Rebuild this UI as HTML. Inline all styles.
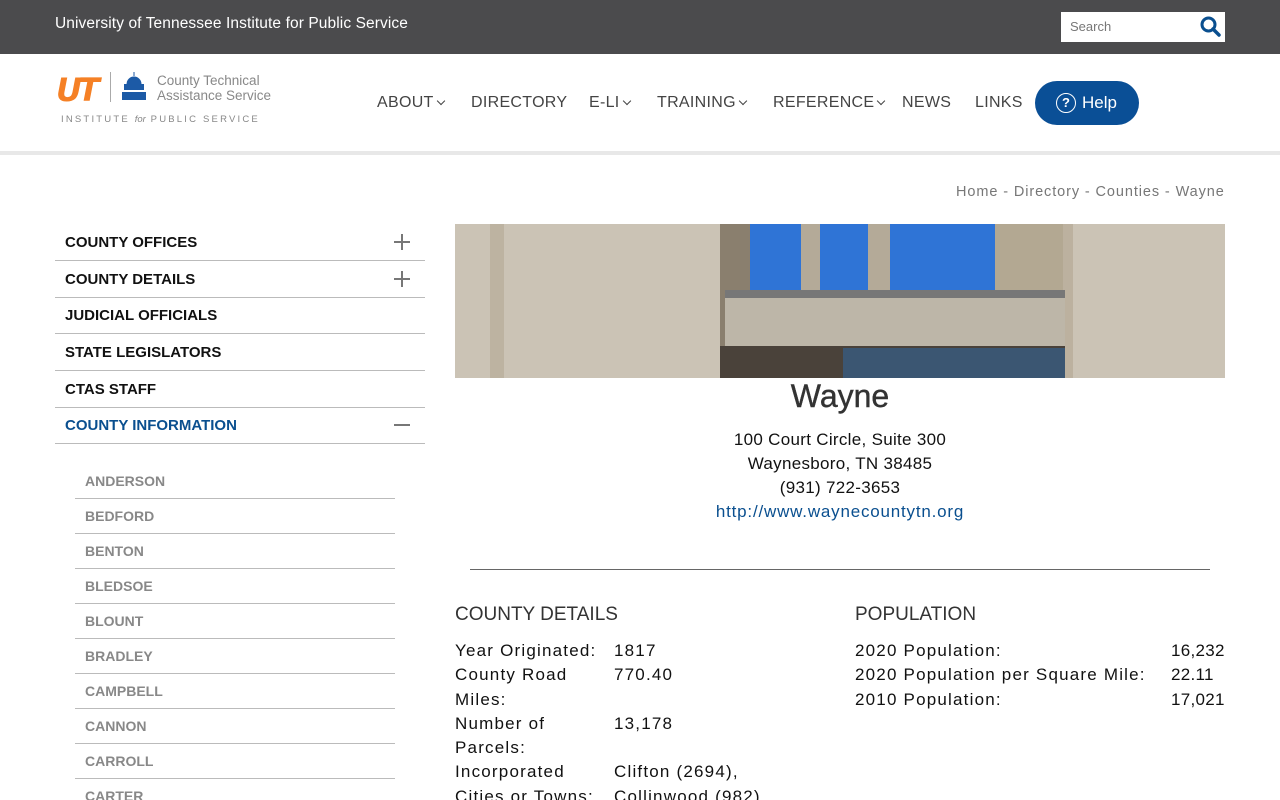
<!DOCTYPE html>
<html><head><meta charset="utf-8"><style>
*{margin:0;padding:0;box-sizing:border-box}
html,body{width:1280px;height:800px;overflow:hidden}
body{background:#fff;font-family:"Liberation Sans",sans-serif;position:relative;color:#222}
.a{position:absolute;white-space:nowrap}
.top{position:absolute;left:0;top:0;width:1280px;height:54px;background:#4b4b4d}
.nav{top:94px;font-size:16px;color:#444;letter-spacing:0.3px}
.chev{display:inline-block;width:6px;height:6px;border-right:1.5px solid #444;border-bottom:1.5px solid #444;transform:rotate(45deg);margin-left:4px;position:relative;top:-3px}
.side{position:absolute;left:55px;width:370px;height:37px;border-bottom:1px solid #bbb;font-weight:bold;font-size:15px;padding:10px 0 0 10px;color:#111}
.pl{position:absolute;right:15px;top:10px;width:16px;height:16px}
.pl:before{content:"";position:absolute;left:0;top:7px;width:16px;height:2px;background:#777}
.pl.p:after{content:"";position:absolute;left:7px;top:0;width:2px;height:16px;background:#777}
.sub{position:absolute;left:75px;width:320px;height:35px;border-bottom:1px solid #bbb;font-weight:bold;font-size:14px;color:#888;padding:9px 0 0 10px}
.dt{font-size:17px;color:#111;letter-spacing:1.2px}
</style></head><body>
<div class="top"></div>
<div class="a" style="left:55px;top:15px;color:#fff;font-size:15.5px;letter-spacing:0.1px">University of Tennessee Institute for Public Service</div>
<div class="a" style="left:1061px;top:12px;width:164px;height:30px;background:#fff"></div>
<div class="a" style="left:1070px;top:19px;font-size:13px;color:#777">Search</div>
<svg class="a" style="left:1199px;top:15px" width="24" height="24" viewBox="0 0 24 24"><circle cx="9.5" cy="9.5" r="6.5" stroke="#0a4f8f" stroke-width="3" fill="none"/><path d="M14 14l6 6" stroke="#0a4f8f" stroke-width="3.5" stroke-linecap="round"/></svg>
<div class="a" style="left:0;top:151px;width:1280px;height:4px;background:#e8e8e8"></div>
<div class="a" style="left:56px;top:71px;font-size:32px;font-weight:900;color:#f58025;letter-spacing:-4px;font-style:italic;font-family:'DejaVu Sans',sans-serif">UT</div>
<div class="a" style="left:110px;top:72px;width:1px;height:30px;background:#aaa"></div>
<svg class="a" style="left:119px;top:70px" width="30" height="32" viewBox="0 0 30 32"><path d="M15 2v4M8 14a7 7 0 0 1 14 0z" fill="#1c5aa6" stroke="#1c5aa6"/><rect x="5" y="14" width="20" height="6" fill="#1c5aa6"/><rect x="3" y="22" width="24" height="8" fill="#1c5aa6"/></svg>
<div class="a" style="left:157px;top:73px;font-size:13.5px;color:#888;line-height:15px">County Technical<br>Assistance Service</div>
<div class="a" style="left:61px;top:114px;font-size:9.5px;color:#888;letter-spacing:2.2px">INSTITUTE <i style="letter-spacing:0">for</i> PUBLIC SERVICE</div>
<div class="a nav" style="left:377px">ABOUT<span class="chev"></span></div>
<div class="a nav" style="left:471px">DIRECTORY</div>
<div class="a nav" style="left:589px">E-LI<span class="chev"></span></div>
<div class="a nav" style="left:657px">TRAINING<span class="chev"></span></div>
<div class="a nav" style="left:773px">REFERENCE<span class="chev"></span></div>
<div class="a nav" style="left:902px">NEWS</div>
<div class="a nav" style="left:975px">LINKS</div>
<div class="a" style="left:1035px;top:81px;width:104px;height:44px;border-radius:22px;background:#0a4f96"></div>
<div class="a" style="left:1056px;top:93px;width:20px;height:20px;border:1.5px solid #fff;border-radius:50%;color:#fff;font-size:13px;font-weight:bold;text-align:center;line-height:17px">?</div>
<div class="a" style="left:1082px;top:93px;color:#fff;font-size:17px">Help</div>
<div class="a" style="left:956px;top:184px;font-size:14.5px;color:#777;letter-spacing:0.9px">Home - Directory - Counties - Wayne</div>
<div class="side" style="top:224px">COUNTY OFFICES<span class="pl p"></span></div>
<div class="side" style="top:261px">COUNTY DETAILS<span class="pl p"></span></div>
<div class="side" style="top:297px">JUDICIAL OFFICIALS</div>
<div class="side" style="top:334px">STATE LEGISLATORS</div>
<div class="side" style="top:371px">CTAS STAFF</div>
<div class="side" style="top:407px;color:#0a4f8f">COUNTY INFORMATION<span class="pl"></span></div>
<div class="sub" style="top:464px">ANDERSON</div>
<div class="sub" style="top:499px">BEDFORD</div>
<div class="sub" style="top:534px">BENTON</div>
<div class="sub" style="top:569px">BLEDSOE</div>
<div class="sub" style="top:604px">BLOUNT</div>
<div class="sub" style="top:639px">BRADLEY</div>
<div class="sub" style="top:674px">CAMPBELL</div>
<div class="sub" style="top:709px">CANNON</div>
<div class="sub" style="top:744px">CARROLL</div>
<div class="sub" style="top:779px">CARTER</div>
<div class="a" style="left:455px;top:224px;width:770px;height:154px;background:#cbc3b5;overflow:hidden">
 <div class="a" style="left:265px;top:0;width:30px;height:154px;background:#8a7f6e"></div>
 <div class="a" style="left:295px;top:0;width:260px;height:70px;background:#2f74d6"></div>
 <div class="a" style="left:346px;top:0;width:19px;height:70px;background:#b4aa98"></div>
 <div class="a" style="left:413px;top:0;width:22px;height:70px;background:#b4aa98"></div>
 <div class="a" style="left:540px;top:0;width:74px;height:70px;background:#b3a892"></div>
 <div class="a" style="left:35px;top:0;width:14px;height:154px;background:#bdb3a1"></div>
 <div class="a" style="left:608px;top:0;width:10px;height:154px;background:#bcb19f"></div>
 <div class="a" style="left:270px;top:66px;width:340px;height:8px;background:#777"></div>
 <div class="a" style="left:270px;top:74px;width:340px;height:48px;background:#bdb6a8"></div>
 <div class="a" style="left:265px;top:122px;width:345px;height:32px;background:#4a423a"></div>
 <div class="a" style="left:388px;top:124px;width:222px;height:30px;background:#3b5672"></div>
</div>
<div class="a" style="left:455px;top:378px;width:770px;text-align:center;font-size:32px;color:#333;-webkit-text-stroke:0.4px #333">Wayne</div>
<div class="a" style="left:455px;top:428px;width:770px;text-align:center;font-size:17px;line-height:24px;color:#111;letter-spacing:0.3px">100 Court Circle, Suite 300<br>Waynesboro, TN 38485<br>(931) 722-3653<br><span style="color:#0a4f8f;letter-spacing:0.8px">http://www.waynecountytn.org</span></div>
<div class="a" style="left:470px;top:569px;width:740px;height:1px;background:#666"></div>
<div class="a" style="left:455px;top:604px;font-size:19px;color:#333">COUNTY DETAILS</div>
<div class="a" style="left:855px;top:604px;font-size:19px;color:#333">POPULATION</div>
<div class="a dt" style="left:455px;top:639px;line-height:24.3px">Year Originated:<br>County Road<br>Miles:<br>Number of<br>Parcels:<br>Incorporated<br>Cities or Towns:</div>
<div class="a dt" style="left:614px;top:639px;line-height:24.3px">1817<br>770.40<br><br>13,178<br><br>Clifton (2694),<br>Collinwood (982),</div>
<div class="a dt" style="left:855px;top:639px;line-height:24.3px">2020 Population:<br>2020 Population per Square Mile:<br>2010 Population:</div>
<div class="a dt" style="left:1171px;top:639px;line-height:24.3px;letter-spacing:0.3px">16,232<br>22.11<br>17,021</div>
</body></html>
